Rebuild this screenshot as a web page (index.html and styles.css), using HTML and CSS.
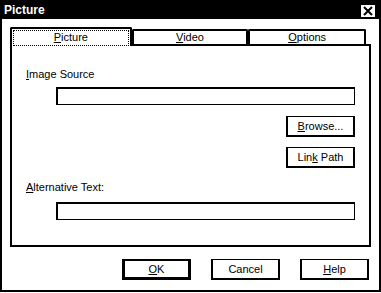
FILE: index.html
```html
<!DOCTYPE html>
<html>
<head>
	<meta charset="utf-8">
	<title>Picture</title>
	<link rel="stylesheet" href="styles.css">
</head>
<body>
	<div class="window">
		<div class="titlebar">
			<span class="title">Picture</span>
			<span class="close">
				<svg width="16" height="14" viewBox="0 0 16 14">
					<rect x="0.5" y="0.5" width="15" height="13" fill="#fff" stroke="#000"/>
					<path d="M4 3 L12 11 M12 3 L4 11" stroke="#000" stroke-width="2"/>
				</svg>
			</span>
		</div>
		<div class="content">
			<div class="tabs">
				<div class="tab active"><span class="focus"><u>P</u>icture</span></div>
				<div class="tab"><u>V</u>ideo</div>
				<div class="tab last"><u>O</u>ptions</div>
			</div>
			<div class="panel">
				<div class="label"><u>I</u>mage Source</div>
				<div class="field"></div>
				<div class="side">
					<div class="btn"><u>B</u>rowse...</div>
					<div class="btn">Lin<u>k</u> Path</div>
				</div>
				<div class="label alt"><u>A</u>lternative Text:</div>
				<div class="field"></div>
			</div>
			<div class="actions">
				<div class="btn default"><u>O</u>K</div>
				<div class="btn">Cancel</div>
				<div class="btn"><u>H</u>elp</div>
			</div>
		</div>
	</div>
</body>
</html>
```

FILE: styles.css
```css
* {
	margin: 0;
	padding: 0;
	box-sizing: border-box;
}
body {
	font: 11px/13px "Liberation Sans", Arial, sans-serif;
	color: #000;
	background: #fff;
}
u {
	text-decoration: underline;
	text-underline-offset: 1px;
}
.window {
	width: 381px;
	height: 292px;
	border: 2px solid #000;
	display: flex;
	flex-direction: column;
}
.titlebar {
	height: 17px;
	background: #000;
	display: flex;
	align-items: center;
	justify-content: space-between;
	padding: 0 3px 0 2px;
}
.title {
	color: #fff;
	font-weight: bold;
	font-size: 12px;
}
.close svg {
	display: block;
}
.content {
	padding: 8px 8px 0 8px;
}
.tabs {
	display: flex;
	align-items: flex-end;
	height: 17px;
	padding-right: 5px;
}
.tab {
	height: 15px;
	border: 2px solid #000;
	border-bottom: none;
	border-radius: 2px 2px 0 0;
	text-align: center;
	line-height: 12px;
	width: 117px;
	background: #fff;
}
.tab.last {
	width: 118px;
}
.tab.active {
	width: 122px;
	height: 19px;
	margin-bottom: -2px;
	position: relative;
	z-index: 1;
	padding: 1px 1px 0;
	line-height: 13px;
}
.focus {
	display: block;
	height: 16px;
	border: 1px dotted #000;
	border-bottom: 1px dotted #000;
}
.panel {
	height: 203px;
	border: 2px solid #000;
	padding: 22px 14px 0 14px;
}
.label {
	height: 19px;
}
.field {
	margin-left: 30px;
	height: 18px;
	border-style: solid;
	border-color: #000;
	border-width: 2px 1px 1px 2px;
}
.side {
	display: flex;
	flex-direction: column;
	align-items: flex-end;
	gap: 10px;
	padding: 11px 0 13px;
}
.label.alt {
	height: 21px;
}
.btn {
	width: 69px;
	height: 21px;
	border-style: solid;
	border-color: #000;
	border-width: 1px 2px 2px 2px;
	text-align: center;
	line-height: 18px;
}
.btn.default {
	border-width: 2px 3px 3px 3px;
	line-height: 16px;
}
.actions {
	display: flex;
	justify-content: flex-end;
	gap: 20px;
	padding: 12px 2px 0 0;
}
```
